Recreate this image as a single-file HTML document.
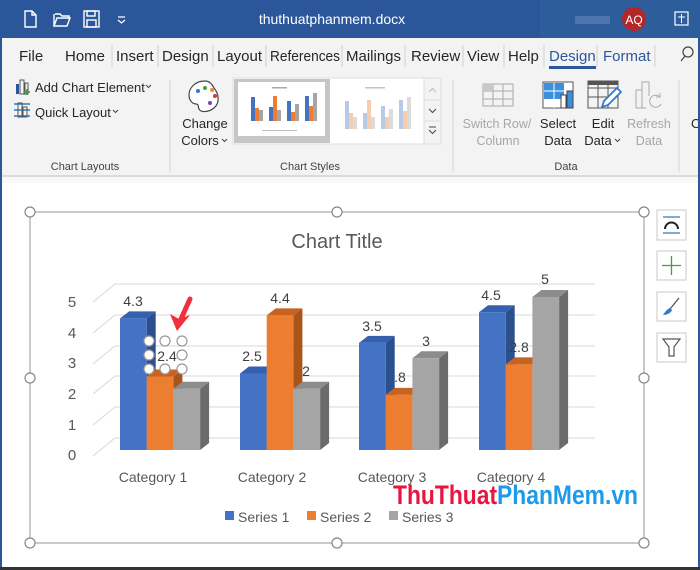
<!DOCTYPE html>
<html><head><meta charset="utf-8"><style>
html,body{margin:0;padding:0;width:700px;height:570px;overflow:hidden;background:#fff}
svg{display:block}
text{font-family:"Liberation Sans",sans-serif}
</style></head><body>
<svg width="700" height="570" viewBox="0 0 700 570" xmlns="http://www.w3.org/2000/svg">
<!-- title bar -->
<rect x="0" y="0" width="700" height="38" fill="#2b579a"/>
<rect x="540" y="0" width="160" height="38" fill="#31609f" opacity="0.6"/>
<!-- qat icons -->
<g stroke="#fff" stroke-width="1.4" fill="none">
<path d="M25 11h7l4 4v12H25z M32 11v4h4"/>
<path d="M55 14h5l2 2h7v3 M54 26l3-8h13l-3 8z M54 14v12"/>
<rect x="84" y="11" width="15" height="16"/><rect x="87" y="11" width="8" height="5"/><rect x="87" y="20" width="9" height="7"/>
</g>
<path d="M118 17h7 M118 20l3.5 3 3.5-3" stroke="#fff" stroke-width="1.2" fill="none"/>
<text x="332" y="24" font-size="14" fill="#fff" text-anchor="middle">thuthuatphanmem.docx</text>
<rect x="575" y="16" width="35" height="8" fill="#5c7fb5" opacity="0.7"/>
<circle cx="634" cy="19" r="12" fill="#b3262a"/>
<text x="634" y="24" font-size="12" fill="#fff" text-anchor="middle">AQ</text>
<rect x="675" y="12" width="13" height="13" fill="none" stroke="#fff" stroke-width="1.2"/><path d="M678 17h7 M681.5 14v9" stroke="#fff"/>
<!-- tabs -->
<rect x="0" y="38" width="700" height="137" fill="#f3f3f3"/>
<g font-size="15" fill="#262626">
<text x="19" y="61">File</text>
<text x="65" y="61">Home</text>
<text x="116" y="61">Insert</text>
<text x="162" y="61">Design</text>
<text x="217" y="61">Layout</text>
<text x="270" y="61" textLength="70" lengthAdjust="spacingAndGlyphs">References</text>
<text x="346" y="61">Mailings</text>
<text x="411" y="61">Review</text>
<text x="467" y="61">View</text>
<text x="508" y="61">Help</text>
</g>
<g stroke="#d0d0d0"><path d="M112 45v22M158 45v22M213 45v22M266 45v22M342 45v22M405 45v22M463 45v22M504 45v22M544 45v22M597 45v22M655 45v22"/></g>
<text x="549" y="61" font-size="15" fill="#2b579a">Design</text>
<rect x="549" y="66" width="47" height="3" fill="#2b579a"/>
<text x="603" y="61" font-size="15" fill="#2b579a">Format</text>
<circle cx="688" cy="52" r="5" fill="none" stroke="#444" stroke-width="1.2"/><path d="M685 56l-4 5" stroke="#444" stroke-width="1.2"/>
<!-- ribbon group 1 -->
<g>
<rect x="16" y="84" width="3" height="10" fill="#2b579a"/><rect x="20" y="80" width="4" height="14" fill="none" stroke="#555"/><rect x="25" y="83" width="3" height="11" fill="none" stroke="#555"/>
<path d="M27 89v6 M24 92h6" stroke="#3a9a3a" stroke-width="1.5"/>
<text x="35" y="92" font-size="13" fill="#262626">Add Chart Element</text>
<path d="M146 85l2.5 2.5 2.5-2.5" stroke="#444" fill="none"/>
<path d="M14 104h16 M14 110h16 M14 116h16" stroke="#2b7bd0" stroke-width="1.5"/>
<rect x="18" y="103" width="4" height="14" fill="none" stroke="#555"/><rect x="23" y="107" width="4" height="10" fill="none" stroke="#555"/>
<text x="35" y="117" font-size="13" fill="#262626">Quick Layout</text>
<path d="M113 110l2.5 2.5 2.5-2.5" stroke="#444" fill="none"/>
<text x="85" y="170" font-size="11" fill="#444" text-anchor="middle">Chart Layouts</text>
</g>
<path d="M170 80v92" stroke="#d6d6d6"/>
<!-- change colors -->
<path d="M205 81c-10 0-16 7-16 14 0 6 4 9 7 9 3 0 2 3 3 5 2 4 10 3 15-1 6-5 5-14 0-20-2-4-5-7-9-7z" fill="#fff" stroke="#444" stroke-width="1.2"/>
<circle cx="198" cy="91" r="2" fill="#2b79d1"/><circle cx="205" cy="88" r="2" fill="#3aa33a"/><circle cx="212" cy="90" r="2" fill="#e8902a"/><circle cx="215" cy="96" r="2" fill="#d93a3a"/><circle cx="210" cy="103" r="2" fill="#8a3cb0"/>
<text x="205" y="128" font-size="13" fill="#262626" text-anchor="middle">Change</text>
<text x="200" y="145" font-size="13" fill="#262626" text-anchor="middle">Colors</text>
<path d="M222 139l2.5 2.5 2.5-2.5" stroke="#444" fill="none"/>
<!-- gallery -->
<rect x="233" y="78" width="208" height="66" fill="#fff" stroke="#dcdcdc"/>
<rect x="234" y="79" width="96" height="64" fill="#c6c6c6"/>
<rect x="238" y="82" width="87" height="54" fill="#fff"/>
<g>
<rect x="251" y="97" width="4" height="24" fill="#4472c4"/><rect x="255" y="108" width="4" height="13" fill="#ed7d31"/><rect x="259" y="110" width="4" height="11" fill="#a5a5a5"/>
<rect x="269" y="107" width="4" height="14" fill="#4472c4"/><rect x="273" y="96" width="4" height="25" fill="#ed7d31"/><rect x="277" y="110" width="4" height="11" fill="#a5a5a5"/>
<rect x="287" y="101" width="4" height="20" fill="#4472c4"/><rect x="291" y="112" width="4" height="9" fill="#ed7d31"/><rect x="295" y="104" width="4" height="17" fill="#a5a5a5"/>
<rect x="305" y="96" width="4" height="25" fill="#4472c4"/><rect x="309" y="106" width="4" height="15" fill="#ed7d31"/><rect x="313" y="93" width="4" height="28" fill="#a5a5a5"/>
<rect x="272" y="87" width="15" height="1.5" fill="#aaa"/><rect x="262" y="130" width="35" height="1" fill="#bbb"/>
</g>
<g opacity="0.7">
<rect x="345" y="101" width="4" height="28" fill="#9cb4e0"/><rect x="349" y="113" width="4" height="16" fill="#f2b88e"/><rect x="353" y="117" width="4" height="12" fill="#ccc"/>
<rect x="363" y="113" width="4" height="16" fill="#9cb4e0"/><rect x="367" y="100" width="4" height="29" fill="#f2b88e"/><rect x="371" y="117" width="4" height="12" fill="#ccc"/>
<rect x="381" y="106" width="4" height="23" fill="#9cb4e0"/><rect x="385" y="117" width="4" height="12" fill="#f2b88e"/><rect x="389" y="109" width="4" height="20" fill="#ccc"/>
<rect x="399" y="100" width="4" height="29" fill="#9cb4e0"/><rect x="403" y="111" width="4" height="18" fill="#f2b88e"/><rect x="407" y="97" width="4" height="32" fill="#ccc"/>
<rect x="365" y="87" width="20" height="1.5" fill="#aaa"/>
</g>
<rect x="424" y="78" width="17" height="66" fill="#f3f3f3" stroke="#dcdcdc"/>
<path d="M424 100h17 M424 121h17" stroke="#dcdcdc"/>
<path d="M429 92l3.5-3.5 3.5 3.5" stroke="#bbb" fill="none"/>
<path d="M429 109l3.5 3.5 3.5-3.5" stroke="#444" fill="none"/>
<path d="M429 127h7 M429 130l3.5 3.5 3.5-3.5" stroke="#444" fill="none"/>
<text x="310" y="170" font-size="11" fill="#444" text-anchor="middle">Chart Styles</text>
<path d="M453 80v92" stroke="#d6d6d6"/>
<!-- data group -->
<g stroke="#aaa" fill="none"><rect x="483" y="84" width="30" height="22"/><path d="M483 91h30M483 99h30M493 84v22M503 84v22"/></g>
<rect x="483" y="84" width="10" height="7" fill="#c8c8c8"/>
<text x="497" y="128" font-size="12.5" fill="#a6a6a6" text-anchor="middle">Switch Row/</text>
<text x="498" y="145" font-size="12.5" fill="#a6a6a6" text-anchor="middle">Column</text>
<rect x="543" y="82" width="30" height="26" fill="#fff" stroke="#555"/>
<rect x="544" y="83" width="20" height="16" fill="#3c8fde"/><path d="M544 91h28M554 83v25" stroke="#fff"/>
<rect x="561" y="95" width="5" height="13" fill="#fff" stroke="#444"/><rect x="567" y="91" width="6" height="17" fill="#3c8fde" stroke="#444"/>
<text x="558" y="128" font-size="13" fill="#262626" text-anchor="middle">Select</text>
<text x="558" y="145" font-size="13" fill="#262626" text-anchor="middle">Data</text>
<g stroke="#555" fill="none"><rect x="588" y="81" width="30" height="27"/><path d="M588 88h30M588 97h30M598 81v27M608 81v27"/></g>
<rect x="588" y="81" width="30" height="4" fill="#555"/>
<path d="M602 107l2-6 13-13 4 4-13 13z" fill="#fff" stroke="#2b7bd0" stroke-width="1.8"/>
<text x="603" y="128" font-size="13" fill="#262626" text-anchor="middle">Edit</text>
<text x="598" y="145" font-size="13" fill="#262626" text-anchor="middle">Data</text>
<path d="M615 139l2.5 2.5 2.5-2.5" stroke="#444" fill="none"/>
<g stroke="#aaa" fill="none"><path d="M636 108V90h6V108 M642 108V82h7v14 M636 108h10"/><path d="M660 97a6 6 0 1 0 1 7 M660 93v4h-4"/></g>
<text x="649" y="128" font-size="12.5" fill="#a6a6a6" text-anchor="middle">Refresh</text>
<text x="649" y="145" font-size="12.5" fill="#a6a6a6" text-anchor="middle">Data</text>
<text x="566" y="170" font-size="11" fill="#444" text-anchor="middle">Data</text>
<path d="M679 80v92" stroke="#d6d6d6"/>
<text x="691" y="128" font-size="13" fill="#262626">C</text>
<!-- ribbon bottom shadow -->
<rect x="0" y="175" width="700" height="2" fill="#dadada"/>
<rect x="0" y="177" width="700" height="6" fill="#f3f3f3" opacity="0.6"/>
<!-- window borders -->
<rect x="0" y="38" width="2" height="532" fill="#2b579a"/>
<rect x="698" y="38" width="2" height="532" fill="#2b579a"/>
<rect x="0" y="567" width="700" height="3" fill="#333"/>

<!-- chart frame -->
<rect x="30" y="212" width="614" height="331" fill="none" stroke="#a6a6a6" stroke-width="1.2"/>
<g fill="#fff" stroke="#888" stroke-width="1.2">
<circle cx="30" cy="212" r="5"/><circle cx="337" cy="212" r="5"/><circle cx="644" cy="212" r="5"/>
<circle cx="30" cy="378" r="5"/><circle cx="644" cy="378" r="5"/>
<circle cx="30" cy="543" r="5"/><circle cx="337" cy="543" r="5"/><circle cx="644" cy="543" r="5"/>
</g>
<!-- side buttons -->
<g fill="#fff" stroke="#c8c8c8">
<rect x="657" y="210" width="29" height="30"/><rect x="657" y="251" width="29" height="29"/><rect x="657" y="292" width="29" height="29"/><rect x="657" y="333" width="29" height="29"/>
</g>
<path d="M663 217h17 M663 233h17" stroke="#2b7bd0" stroke-width="1.3"/>
<path d="M665 229a6.5 6.5 0 0 1 13 0" stroke="#222" stroke-width="2" fill="none"/>
<path d="M671.5 256v19 M662 265.5h19" stroke="#3aa33a" stroke-width="1.3"/>
<path d="M679 298l-9 11" stroke="#555" stroke-width="1.3"/><path d="M670 308c-3 1-5 4-7 7 4 0 8-2 9-5z" fill="#2b7bd0"/>
<path d="M663 339h17l-6 8v9h-5v-9z" fill="none" stroke="#555" stroke-width="1.2"/>

<text x="337" y="248" font-size="20" fill="#595959" text-anchor="middle">Chart Title</text>
<!-- gridlines -->
<g stroke="#d9d9d9" stroke-width="1.1" fill="none">
<path d="M93 302l22-18h480"/><path d="M93 333l22-18h480"/><path d="M93 364l22-18h480"/><path d="M93 394l22-18h480"/><path d="M93 425l22-18h480"/><path d="M93 456l22-18h480"/>
</g>
<g font-size="15" fill="#595959" text-anchor="middle">
<text x="72" y="307">5</text><text x="72" y="338">4</text><text x="72" y="368">3</text><text x="72" y="399">2</text><text x="72" y="430">1</text><text x="72" y="460">0</text>
</g>
<!-- bars -->
<g id="bars"></g>
<g font-size="14" fill="#404040" text-anchor="middle">
<text x="133" y="306">4.3</text>
<text x="252" y="361">2.5</text><text x="280" y="303">4.4</text><text x="306" y="376">2</text>
<text x="372" y="331">3.5</text><text x="400" y="382">.8</text><text x="426" y="346">3</text>
<text x="491" y="300">4.5</text><text x="519" y="352">2.8</text><text x="545" y="284">5</text>
<text x="167" y="361">2.4</text>
</g>
<g fill="#fff" stroke="#999" stroke-width="1.2">
<circle cx="149" cy="341" r="5"/><circle cx="165" cy="341" r="5"/><circle cx="182" cy="341" r="5"/>
<circle cx="149" cy="355" r="5"/><circle cx="182" cy="355" r="5"/>
<circle cx="149" cy="369" r="5"/><circle cx="165" cy="369" r="5"/><circle cx="182" cy="369" r="5"/>
</g>
<path d="M190 299l-9 20" stroke="#f0303a" stroke-width="5" stroke-linecap="round"/>
<path d="M177 331l-7-17 9 5 11-4z" fill="#f0303a"/>
<g font-size="14" fill="#595959" text-anchor="middle">
<text x="153" y="482">Category 1</text><text x="272" y="482">Category 2</text><text x="392" y="482">Category 3</text><text x="511" y="482">Category 4</text>
</g>
<text x="393" y="504" font-size="27" font-weight="bold" fill="#e8163f" textLength="245" lengthAdjust="spacingAndGlyphs">ThuThuat<tspan fill="#1e9be8">PhanMem.vn</tspan></text>
<g font-size="14" fill="#595959">
<rect x="225" y="511" width="9" height="9" fill="#4472c4"/><text x="238" y="522">Series 1</text>
<rect x="307" y="511" width="9" height="9" fill="#ed7d31"/><text x="320" y="522">Series 2</text>
<rect x="389" y="511" width="9" height="9" fill="#a5a5a5"/><text x="402" y="522">Series 3</text>
</g>
</svg>
<script>
(function(){
var g=document.getElementById('bars');var ns='http://www.w3.org/2000/svg';
var data=[[120,[4.3,2.4,2]],[240,[2.5,4.4,2]],[359,[3.5,1.8,3]],[479,[4.5,2.8,5]]];
var col=[['#4472c4','#2c4f8e','#3560b0'],['#ed7d31','#a9541b','#c8621f'],['#a5a5a5','#6b6b6b','#8c8c8c']];
var w=26.7,dx=9,dy=7,base=450,k=30.6;
function p(d,f){var e=document.createElementNS(ns,'path');e.setAttribute('d',d);e.setAttribute('fill',f);g.appendChild(e);}
data.forEach(function(c){c[1].forEach(function(v,i){var x=c[0]+i*w,t=base-v*k;
p('M'+(x+w)+' '+t+'l'+dx+' '+(-dy)+'V'+(base-dy)+'l'+(-dx)+' '+dy+'z',col[i][1]);
p('M'+x+' '+t+'l'+dx+' '+(-dy)+'h'+w+'l'+(-dx)+' '+dy+'z',col[i][2]);
p('M'+x+' '+t+'h'+w+'V'+base+'H'+x+'z',col[i][0]);});});
})();
</script>
</body></html>
